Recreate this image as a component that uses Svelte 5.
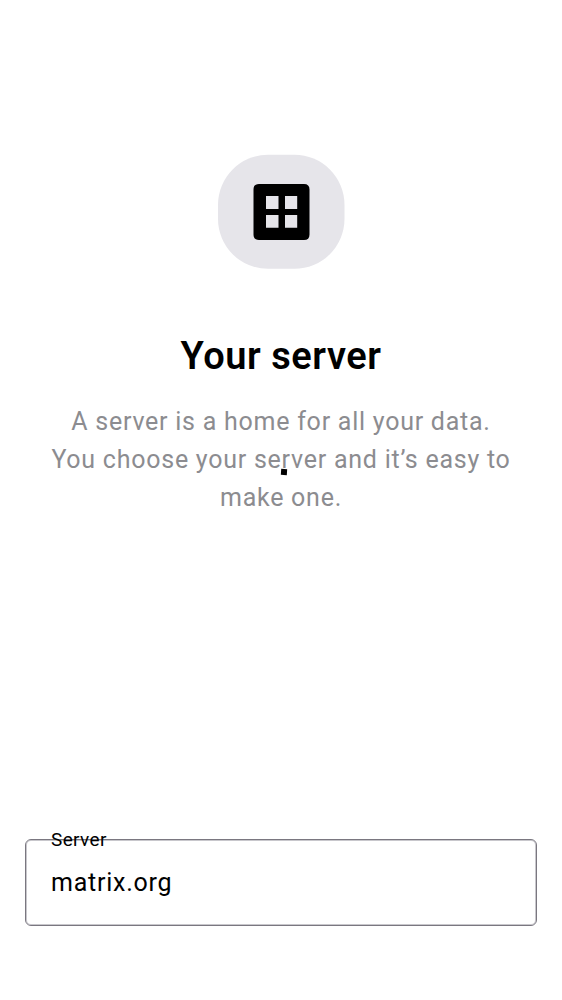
<script>
  let server = $state('matrix.org');
</script>

<main>
  <header>
    <div class="badge">
      <svg viewBox="0 0 127 115" aria-hidden="true">
        <rect width="126.500" height="114" y="0.800" rx="50" fill="#e6e5ea" />
        <path fill-rule="evenodd" d="M41 30H86Q91.500 30 91.500 35.500V80.500Q91.500 86 86 86H41Q35.500 86 35.500 80.500V35.500Q35.500 30 41 30ZM48 42V55H60.500V42ZM67 42V55H79.200V42ZM48 61V73.700H60.500V61ZM67 61V73.700H79.200V61Z" />
      </svg>
    </div>
    <h1>Your server</h1>
    <div class="intro">
      <p>A server is a home for all your data. You choose your server and it’s easy to make one.</p>
      <span class="spinner"></span>
    </div>
  </header>
  <form onsubmit={(e) => e.preventDefault()}>
    <div class="field">
      <label for="server">Server</label>
      <input id="server" type="text" bind:value={server} />
    </div>
  </form>
</main>

<style>
  :global(body) { margin: 0; background: #fff; }
  main {
    box-sizing: border-box;
    min-height: 100vh;
    padding: 154px 25px 74px;
    display: flex;
    flex-direction: column;
    justify-content: space-between;
    font-family: Roboto, "Noto Sans", sans-serif;
    color: #000;
  }
  header { display: flex; flex-direction: column; align-items: center; text-align: center; }
  .badge { width: 127px; height: 115px; }
  svg { display: block; width: 100%; height: 100%; }
  h1 { margin: 63px 0 0; font-size: 38px; line-height: 48px; font-weight: 600; letter-spacing: 0.015em; }
  .intro { position: relative; margin-top: 23px; padding: 0 24px; }
  p { margin: 0; font-size: 25px; line-height: 38px; letter-spacing: 0.03em; color: #8c8c90; }
  .spinner { position: absolute; left: 50%; top: 66px; width: 6px; height: 6px; background: #000; transform: rotate(4deg); }
  .field { position: relative; }
  label { position: absolute; left: 26px; top: -11px; font-size: 19px; line-height: 24px; letter-spacing: 0.02em; }
  input {
    display: block;
    box-sizing: border-box;
    width: 100%;
    height: 87px;
    padding: 0 25px;
    border: 1px solid #7a7780;
    border-radius: 6px;
    box-shadow: inset 0 0 0 1px #c8c7cc;
    background: transparent;
    font: 25px/38px Roboto, "Noto Sans", sans-serif;
    letter-spacing: 0.03em;
    color: #000;
    outline: none;
  }
</style>
